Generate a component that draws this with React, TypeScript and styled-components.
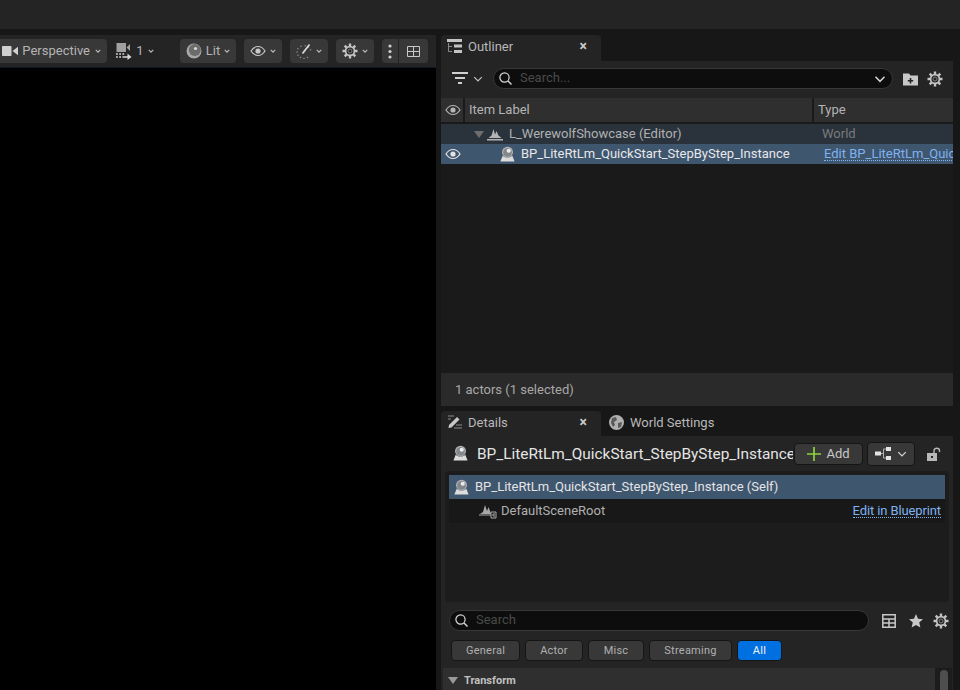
import React from "react"
import styled, { createGlobalStyle } from "styled-components"

const GlobalStyle = createGlobalStyle`
  html, body {
    margin: 0;
    padding: 0;
    background: #171717;
    font-family: Roboto, "Liberation Sans", sans-serif;
    color: #b8b8b8;
    overflow: hidden;
  }
`

const Page = styled.div`
  width: 960px;
  height: 690px;
  display: flex;
  flex-direction: column;
  overflow: hidden;
`
const TopBar = styled.div`
  height: 29px;
  flex: none;
  background: #242424;
`
const Main = styled.div`
  flex: 1;
  min-height: 0;
  display: flex;
`
const ViewportColumn = styled.div`
  width: 436px;
  flex: none;
  margin-top: 6px;
  display: flex;
  flex-direction: column;
`
const ViewToolbar = styled.div`
  height: 32px;
  flex: none;
  background: #242424;
  display: flex;
  justify-content: flex-end;
  align-items: center;
  padding-right: 8px;
  gap: 8px;
  overflow: hidden;
  white-space: nowrap;
`
const ViewCanvas = styled.div`
  flex: 1;
  background: #000;
  border-top: 1px solid #0b1a2a;
`
const ToolButton = styled.div<{ $w: number; $flat?: boolean; $mr?: number }>`
  flex: none;
  width: ${p => p.$w}px;
  height: 24px;
  margin-right: ${p => p.$mr || 0}px;
  border-radius: 4px;
  background: ${p => (p.$flat ? "transparent" : "#383838")};
  display: flex;
  align-items: center;
  justify-content: center;
  gap: 4px;
  font-size: 13px;
  color: #b4b4b4;
`
const ToolText = styled.span`
  padding-bottom: 2px;
`
const PerspectiveButton = styled(ToolButton)`
  justify-content: flex-end;
  padding-right: 6px;
  box-sizing: border-box;
`
const ToolGroup = styled.div`
  flex: none;
  width: 46px;
  height: 24px;
  border-radius: 4px;
  background: #383838;
  display: flex;
  align-items: center;
`
const GroupCell = styled.div<{ $w: number; $line?: boolean }>`
  width: ${p => p.$w}px;
  height: 24px;
  display: flex;
  align-items: center;
  justify-content: center;
  border-left: ${p => (p.$line ? "1px solid #242424" : "none")};
`
const SidePanel = styled.div`
  width: 512px;
  flex: none;
  margin-left: 5px;
  display: flex;
  flex-direction: column;
`
const TabStrip = styled.div`
  height: 26px;
  flex: none;
  margin-top: 6px;
  display: flex;
`
const Tab = styled.div<{ $active?: boolean }>`
  width: 160px;
  height: 26px;
  box-sizing: border-box;
  padding: 0 14px 4px 6px;
  display: flex;
  align-items: center;
  gap: 6px;
  font-size: 13px;
  color: #b8b8b8;
  background: ${p => (p.$active ? "#242424" : "transparent")};
  border-radius: 4px 4px 0 0;
`
const TabLabel = styled.span`
  flex: 1;
`
const TabClose = styled.span`
  font-size: 14px;
  font-weight: 700;
  color: #c8c8c8;
  line-height: 1;
`
const OutlinerToolbar = styled.div`
  height: 37px;
  flex: none;
  background: #242424;
  display: flex;
  align-items: center;
  padding: 0 10px 2px 11px;
  box-sizing: border-box;
`
const FilterGap = styled.div`
  width: 10px;
  flex: none;
`
const SearchBox = styled.div<{ $w: number }>`
  width: ${p => p.$w}px;
  height: 21px;
  flex: none;
  box-sizing: border-box;
  background: #0d0d0d;
  border: 1px solid #383838;
  border-radius: 11px;
  display: flex;
  align-items: center;
  padding: 0 6px 0 5px;
  gap: 8px;
  font-size: 13px;
  color: #4a4a4a;
`
const SearchText = styled.span`
  flex: 1;
  padding-bottom: 2px;
`
const HeaderRow = styled.div`
  height: 24px;
  flex: none;
  background: #2f2f2f;
  border-bottom: 2px solid #1a1a1a;
  display: flex;
  font-size: 13px;
  color: #b4b4b4;
`
const HeaderCell = styled.div<{ $w?: number }>`
  width: ${p => (p.$w ? p.$w + "px" : "auto")};
  flex: ${p => (p.$w ? "none" : 1)};
  box-sizing: border-box;
  display: flex;
  align-items: center;
  padding-left: 4px;
  border-right: ${p => (p.$w ? "2px solid #1a1a1a" : "none")};
`
const HeaderText = styled.span`
  padding-bottom: 2px;
`
const TreeArea = styled.div`
  flex: 1;
  background: #1a1a1a;
  min-height: 0;
`
const OutlinerRow = styled.div<{ $selected?: boolean }>`
  height: 20px;
  display: flex;
  align-items: center;
  font-size: 13px;
  white-space: nowrap;
  overflow: hidden;
  background: ${p => (p.$selected ? "#3f566f" : "#2a333c")};
  color: ${p => (p.$selected ? "#e8e8e8" : "#b0b0b0")};
`
const NameCell = styled.div<{ $indent: number }>`
  width: 372px;
  flex: none;
  box-sizing: border-box;
  padding-left: ${p => p.$indent}px;
  display: flex;
  align-items: center;
`
const NameLabel = styled.span<{ $ml: number }>`
  margin-left: ${p => p.$ml}px;
  padding-bottom: 2px;
`
const TypeText = styled.span`
  margin-left: 9px;
  padding-bottom: 2px;
  color: #7a7a7a;
`
const LinkText = styled.span`
  color: #7fb2f0;
  border-bottom: 1px dotted #7fb2f0;
  line-height: 13px;
  letter-spacing: -0.12px;
`
const TypeLink = styled(LinkText)`
  margin-left: 11px;
  letter-spacing: 0;
`
const Footer = styled.div`
  height: 33px;
  flex: none;
  background: #2a2a2a;
  display: flex;
  align-items: center;
  padding-left: 14px;
  font-size: 13px;
  color: #a8a8a8;
`
const DetailsPanel = styled.div`
  height: 279px;
  flex: none;
  display: flex;
  flex-direction: column;
  margin-top: 5px;
`
const DetailsTabStrip = styled(TabStrip)`
  height: 25px;
  margin-top: 0;
`
const DetailsTab = styled(Tab)`
  height: 25px;
  padding-bottom: 3px;
`
const DetailsBody = styled.div`
  flex: 1;
  min-height: 0;
  background: #242424;
  display: flex;
  flex-direction: column;
  overflow: hidden;
`
const TitleRow = styled.div`
  height: 35px;
  flex: none;
  display: flex;
  align-items: center;
  padding-left: 11px;
`
const TitleText = styled.div`
  width: 316px;
  flex: none;
  margin-left: 8px;
  overflow: hidden;
  white-space: nowrap;
  font-size: 15.4px;
  color: #e4e4e4;
`
const AddButton = styled.div`
  width: 69px;
  height: 22px;
  flex: none;
  margin-left: 1px;
  box-sizing: border-box;
  background: #383838;
  border: 1px solid #151515;
  border-radius: 4px;
  display: flex;
  align-items: center;
  justify-content: center;
  gap: 5px;
  font-size: 13px;
  color: #c8c8c8;
`
const BlueprintButton = styled.div`
  width: 48px;
  height: 24px;
  flex: none;
  margin: 0 12px 0 4px;
  box-sizing: border-box;
  background: #383838;
  border: 1px solid #151515;
  border-radius: 4px;
  display: flex;
  align-items: center;
  justify-content: center;
  gap: 6px;
`
const ComponentTree = styled.div`
  height: 131px;
  flex: none;
  margin: 0 4px;
  padding: 4px;
  box-sizing: border-box;
  background: #1c1c1c;
  border-radius: 4px;
`
const ComponentRow = styled.div<{ $selected?: boolean }>`
  height: 24px;
  display: flex;
  align-items: center;
  font-size: 13px;
  white-space: nowrap;
  background: ${p => (p.$selected ? "#3f566f" : "#181818")};
  color: ${p => (p.$selected ? "#e4e4e4" : "#b0b0b0")};
  padding: 0 4px 0 ${p => (p.$selected ? 4 : 30)}px;
`
const RowLabel = styled.span<{ $ml: number }>`
  flex: 1;
  margin-left: ${p => p.$ml}px;
  padding-bottom: 2px;
`
const SearchRow = styled.div`
  height: 21px;
  flex: none;
  margin-top: 8px;
  padding-left: 8px;
  display: flex;
  align-items: center;
`
const FilterRow = styled.div`
  height: 21px;
  flex: none;
  margin-top: 9px;
  padding-left: 10px;
  display: flex;
  gap: 5px;
`
const FilterChip = styled.div<{ $w: number; $active?: boolean }>`
  width: ${p => p.$w}px;
  box-sizing: border-box;
  background: ${p => (p.$active ? "#0070e0" : "#383838")};
  border: 1px solid #151515;
  border-radius: 4px;
  display: flex;
  align-items: center;
  justify-content: center;
  font-size: 11px;
  letter-spacing: 0.25px;
  color: ${p => (p.$active ? "#f0f0f0" : "#b0b0b0")};
`
const SectionRow = styled.div`
  flex: 1;
  margin: 7px 1px 0 2px;
  display: flex;
`
const SectionHeader = styled.div`
  flex: 1;
  background: #2f2f2f;
  display: flex;
  align-items: center;
  height: 24px;
  padding-left: 5px;
  gap: 6px;
  font-size: 11px;
  font-weight: 700;
  color: #c0c0c0;
`
const Scroll = styled.div`
  width: 17px;
  flex: none;
  background: #1c1c1c;
  display: flex;
  justify-content: center;
  padding-top: 2px;
`
const ScrollThumb = styled.div`
  width: 8px;
  height: 40px;
  border-radius: 4px;
  background: #4e4e4e;
`
const Icon = styled.svg<{ $ml?: number }>`
  flex: none;
  display: block;
  margin-left: ${p => p.$ml ?? 0}px;
`

const Chevron = ({ s = 7, c = "#b8b8b8", w = 1.2, ml }: { s?: number; c?: string; w?: number; ml?: number }) => (
  <Icon width={s} height={s} viewBox="0 0 8 8" $ml={ml}>
    <path d="M1 2.5 4 5.5 7 2.5" fill="none" stroke={c} strokeWidth={w * (8 / s)} />
  </Icon>
)

const EyeIcon = ({ s = 16, c = "#c8c8c8" }: { s?: number; c?: string }) => (
  <Icon width={s} height={s} viewBox="0 0 16 16">
    <path d="M1 8C3 4.8 5.3 3.5 8 3.5S13 4.8 15 8C13 11.2 10.7 12.5 8 12.5S3 11.2 1 8Z" fill="none" stroke={c} strokeWidth="1.2" />
    <circle cx="8" cy="8" r="2.6" fill={c} />
  </Icon>
)

const GearIcon = ({ s = 16, ml }: { s?: number; ml?: number }) => (
  <Icon width={s} height={s} viewBox="0 0 16 16" $ml={ml}>
    <path
      d="M8 0.5V3.2M8 12.8V15.5M0.5 8H3.2M12.8 8H15.5M2.7 2.7 4.6 4.6M11.4 11.4 13.3 13.3M2.7 13.3 4.6 11.4M11.4 4.6 13.3 2.7"
      stroke="#c4c4c4"
      strokeWidth="2.4"
    />
    <circle cx="8" cy="8" r="4.4" fill="#242424" stroke="#c4c4c4" strokeWidth="1.7" />
    <circle cx="8" cy="8" r="2" fill="none" stroke="#808080" strokeWidth="1" />
  </Icon>
)

const SearchIcon = () => (
  <Icon width={13} height={13} viewBox="0 0 13 13">
    <circle cx="5.5" cy="5.5" r="4.6" fill="none" stroke="#d8d8d8" strokeWidth="1.2" />
    <path d="M9 9 12.5 12.5" stroke="#d8d8d8" strokeWidth="1.4" />
  </Icon>
)

const ActorIcon = ({ s = 17, ml }: { s?: number; ml?: number }) => (
  <Icon width={s} height={s} viewBox="0 0 18 18" $ml={ml}>
    <path d="M4 10 1.5 16.5H16.5L14 10C12.5 13 5.5 13 4 10Z" fill="#dcdcdc" />
    <circle cx="9" cy="6.6" r="5.8" fill="#b4b4b4" />
    <circle cx="9" cy="6.8" r="4.6" fill="#83878c" />
    <circle cx="10.3" cy="5" r="2.2" fill="#ececec" />
  </Icon>
)

const LevelIcon = ({ ml }: { ml?: number }) => (
  <Icon width={16} height={13} viewBox="0 0 16 13" $ml={ml}>
    <path d="M1.5 10 4.5 7.5 6.5 1 8 6.5 9.5 3 11.5 7.5 14.5 10Z" fill="#b4b4b4" />
    <path d="M0 11H16V12.5H0Z" fill="#b4b4b4" />
  </Icon>
)

const gaugeDots = [150, 180, 210, 240, 270, 300, 20, 50, 80, 115]

export default function App() {
  return (
    <Page>
      <GlobalStyle />
      <TopBar />
      <Main>
        <ViewportColumn>
          <ViewToolbar>
            <PerspectiveButton $w={118} $mr={2}>
              <Icon width={16} height={10} viewBox="0 0 16 10">
                <rect x="0" y="0" width="9.5" height="10" rx="0.8" fill="#d0d0d0" />
                <path d="M10.5 5 16 0.8V9.2Z" fill="#d0d0d0" />
              </Icon>
              <ToolText>Perspective</ToolText>
              <Chevron s={6} ml={1} />
            </PerspectiveButton>
            <ToolButton $w={36} $flat $mr={19}>
              <Icon width={16} height={17} viewBox="0 0 16 17">
                <rect x="0.5" y="0" width="9.5" height="9" fill="#a0a0a0" />
                <path d="M10.5 4.5 14 1V8Z" fill="#a0a0a0" />
                <path d="M0 11H1.8M3.2 11H5M6.4 11H8.2M0 14H1.8M3.2 14H5M6.4 14H12" stroke="#d8d8d8" strokeWidth="1.3" />
                <path d="M11.5 10.5 15.5 14 11.5 17Z" fill="#d8d8d8" />
              </Icon>
              <ToolText>1</ToolText>
              <Chevron s={6} />
            </ToolButton>
            <ToolButton $w={56}>
              <Icon width={16} height={16} viewBox="0 0 16 16">
                <circle cx="8" cy="8" r="7.5" fill="#a8a8a8" />
                <circle cx="8.8" cy="7" r="6" fill="#6c6c6c" />
                <circle cx="9.5" cy="5.5" r="1.6" fill="#d8d8d8" />
              </Icon>
              <ToolText>Lit</ToolText>
              <Chevron s={6} />
            </ToolButton>
            <ToolButton $w={38}>
              <EyeIcon />
              <Chevron s={6} />
            </ToolButton>
            <ToolButton $w={38}>
              <Icon width={16} height={16} viewBox="0 0 16 16">
                {gaugeDots.map(a => (
                  <circle
                    key={a}
                    cx={8 + 7 * Math.cos((a * Math.PI) / 180)}
                    cy={9 - 6.4 * Math.sin((a * Math.PI) / 180)}
                    r="0.75"
                    fill="#8e8e8e"
                  />
                ))}
                <path d="M6.5 10.5 13.5 1.5" stroke="#dcdcdc" strokeWidth="1.7" />
              </Icon>
              <Chevron s={6} />
            </ToolButton>
            <ToolButton $w={38}>
              <GearIcon />
              <Chevron s={6} />
            </ToolButton>
            <ToolGroup>
              <GroupCell $w={16}>
                <Icon width={4} height={15} viewBox="0 0 4 15">
                  <circle cx="2" cy="2" r="1.6" fill="#d0d0d0" />
                  <circle cx="2" cy="7.5" r="1.6" fill="#d0d0d0" />
                  <circle cx="2" cy="13" r="1.6" fill="#d0d0d0" />
                </Icon>
              </GroupCell>
              <GroupCell $w={30} $line>
                <Icon width={13} height={11} viewBox="0 0 13 11">
                  <path d="M0.5 0.5H12.5V10.5H0.5ZM6.5 0.5V10.5M0.5 5.5H12.5" fill="none" stroke="#c8c8c8" strokeWidth="1" />
                </Icon>
              </GroupCell>
            </ToolGroup>
          </ViewToolbar>
          <ViewCanvas />
        </ViewportColumn>
        <SidePanel>
          <TabStrip>
            <Tab $active>
              <Icon width={15} height={14} viewBox="0 0 15 14">
                <path d="M0 0H15V3H0ZM7 5.5H15V8.5H7ZM7 11H15V14H7Z" fill="#c4c4c4" />
                <path d="M1.5 4V12.5H5M1.5 7.5H5" fill="none" stroke="#8a8a8a" strokeWidth="1" />
              </Icon>
              <TabLabel>Outliner</TabLabel>
              <TabClose>×</TabClose>
            </Tab>
          </TabStrip>
          <OutlinerToolbar>
            <Icon width={16} height={13} viewBox="0 0 16 13">
              <path d="M0 1H16M3 6H13M6 11H10" stroke="#d0d0d0" strokeWidth="1.8" />
            </Icon>
            <Chevron s={10} c="#c0c0c0" w={1.3} ml={5} />
            <FilterGap />
            <SearchBox $w={400}>
              <SearchIcon />
              <SearchText>Search...</SearchText>
              <Chevron s={12} c="#d0d0d0" w={1.6} />
            </SearchBox>
            <Icon width={15} height={14} viewBox="0 0 15 14" $ml={10}>
              <path d="M0 1.5H6L7.5 3.5H15V13.5H0Z" fill="#c8c8c8" />
              <path d="M7.5 6V11.5M4.8 8.7H10.2" stroke="#242424" strokeWidth="1.6" />
            </Icon>
            <GearIcon ml={9} />
          </OutlinerToolbar>
          <HeaderRow>
            <HeaderCell $w={24}>
              <EyeIcon c="#b4b4b4" />
            </HeaderCell>
            <HeaderCell $w={349}>
              <HeaderText>Item Label</HeaderText>
            </HeaderCell>
            <HeaderCell>
              <HeaderText>Type</HeaderText>
            </HeaderCell>
          </HeaderRow>
          <TreeArea>
            <OutlinerRow>
              <NameCell $indent={33}>
                <Icon width={10} height={7} viewBox="0 0 10 7">
                  <path d="M0 0H10L5 7Z" fill="#6e6e6e" />
                </Icon>
                <LevelIcon ml={3} />
                <NameLabel $ml={6}>L_WerewolfShowcase (Editor)</NameLabel>
              </NameCell>
              <TypeText>World</TypeText>
            </OutlinerRow>
            <OutlinerRow $selected>
              <NameCell $indent={4}>
                <EyeIcon c="#e4e4e4" />
                <ActorIcon ml={38} />
                <NameLabel $ml={5}>BP_LiteRtLm_QuickStart_StepByStep_Instance</NameLabel>
              </NameCell>
              <TypeLink>Edit BP_LiteRtLm_QuickStart_StepByStep</TypeLink>
            </OutlinerRow>
          </TreeArea>
          <Footer>1 actors (1 selected)</Footer>
          <DetailsPanel>
            <DetailsTabStrip>
              <DetailsTab $active>
                <Icon width={15} height={15} viewBox="0 0 15 15">
                  <path d="M2 10 10 2 12.5 4.5 4.5 12.5 1.5 13Z" fill="#c8c8c8" />
                  <path d="M1 1H7M1 4H4M9 10H15M7 13H15" stroke="#8a8a8a" strokeWidth="1" />
                </Icon>
                <TabLabel>Details</TabLabel>
                <TabClose>×</TabClose>
              </DetailsTab>
              <DetailsTab>
                <Icon width={15} height={15} viewBox="0 0 15 15" $ml={2}>
                  <circle cx="7.5" cy="7.5" r="7.5" fill="#b0b0b0" />
                  <path d="M3 3 7 2 8 5 5 7 6 10 4 12 2 8ZM9 8 13 7 12 12 9 13Z" fill="#5a5a5a" />
                </Icon>
                <TabLabel>World Settings</TabLabel>
              </DetailsTab>
            </DetailsTabStrip>
            <DetailsBody>
              <TitleRow>
                <ActorIcon />
                <TitleText>BP_LiteRtLm_QuickStart_StepByStep_Instance</TitleText>
                <AddButton>
                  <Icon width={14} height={14} viewBox="0 0 14 14">
                    <path d="M7 0V14M0 7H14" stroke="#8fd13f" strokeWidth="1.7" />
                  </Icon>
                  Add
                </AddButton>
                <BlueprintButton>
                  <Icon width={16} height={13} viewBox="0 0 16 13">
                    <rect x="0" y="4.5" width="6" height="4" fill="#e4e4e4" />
                    <rect x="11" y="0" width="5" height="4" fill="#e4e4e4" />
                    <rect x="11" y="9" width="5" height="4" fill="#e4e4e4" />
                    <path d="M6 6.5H8.5M11 2H8.5V11H11" fill="none" stroke="#b0b0b0" strokeWidth="1" />
                  </Icon>
                  <Chevron s={10} c="#d0d0d0" w={1.4} />
                </BlueprintButton>
                <Icon width={14} height={14} viewBox="0 0 14 14">
                  <path d="M0 6H10V14H0Z" fill="#b8b8b8" />
                  <rect x="4" y="9" width="2" height="2" fill="#242424" />
                  <path d="M7 6V3.5C7 0.5 12.5 0.5 12.5 3.5V5" fill="none" stroke="#b8b8b8" strokeWidth="1.4" />
                </Icon>
              </TitleRow>
              <ComponentTree>
                <ComponentRow $selected>
                  <ActorIcon />
                  <RowLabel $ml={5}>BP_LiteRtLm_QuickStart_StepByStep_Instance (Self)</RowLabel>
                </ComponentRow>
                <ComponentRow>
                  <Icon width={18} height={16} viewBox="0 0 18 16">
                    <path d="M1 11 4 9 6 2 8 8 9.5 4 11 8 12 11Z" fill="#a8a8a8" />
                    <path d="M0 12H12" stroke="#a8a8a8" strokeWidth="1" />
                    <path d="M12 9H17V15H12Z" fill="#1a1a1a" stroke="#a8a8a8" strokeWidth="1" />
                    <path d="M16 11H14V13H16" fill="none" stroke="#a8a8a8" strokeWidth="1" />
                  </Icon>
                  <RowLabel $ml={4}>DefaultSceneRoot</RowLabel>
                  <LinkText>Edit in Blueprint</LinkText>
                </ComponentRow>
              </ComponentTree>
              <SearchRow>
                <SearchBox $w={420}>
                  <SearchIcon />
                  <SearchText>Search</SearchText>
                </SearchBox>
                <Icon width={14} height={14} viewBox="0 0 14 14" $ml={13}>
                  <path d="M0.8 0.8H13.2V13.2H0.8ZM0.8 5H13.2M0.8 9H13.2M7 5V13.2" fill="none" stroke="#c8c8c8" strokeWidth="1.5" />
                </Icon>
                <Icon width={14} height={14} viewBox="0 0 14 14" $ml={13}>
                  <path d="M7 0 9 4.8 14 5.3 10.2 8.6 11.4 13.6 7 11 2.6 13.6 3.8 8.6 0 5.3 5 4.8Z" fill="#c8c8c8" />
                </Icon>
                <GearIcon ml={10} />
              </SearchRow>
              <FilterRow>
                <FilterChip $w={69}>General</FilterChip>
                <FilterChip $w={58}>Actor</FilterChip>
                <FilterChip $w={56}>Misc</FilterChip>
                <FilterChip $w={83}>Streaming</FilterChip>
                <FilterChip $w={45} $active>All</FilterChip>
              </FilterRow>
              <SectionRow>
                <SectionHeader>
                  <Icon width={10} height={7} viewBox="0 0 10 7">
                    <path d="M0 0H10L5 7Z" fill="#9a9a9a" />
                  </Icon>
                  Transform
                </SectionHeader>
                <Scroll>
                  <ScrollThumb />
                </Scroll>
              </SectionRow>
            </DetailsBody>
          </DetailsPanel>
        </SidePanel>
      </Main>
    </Page>
  )
}
